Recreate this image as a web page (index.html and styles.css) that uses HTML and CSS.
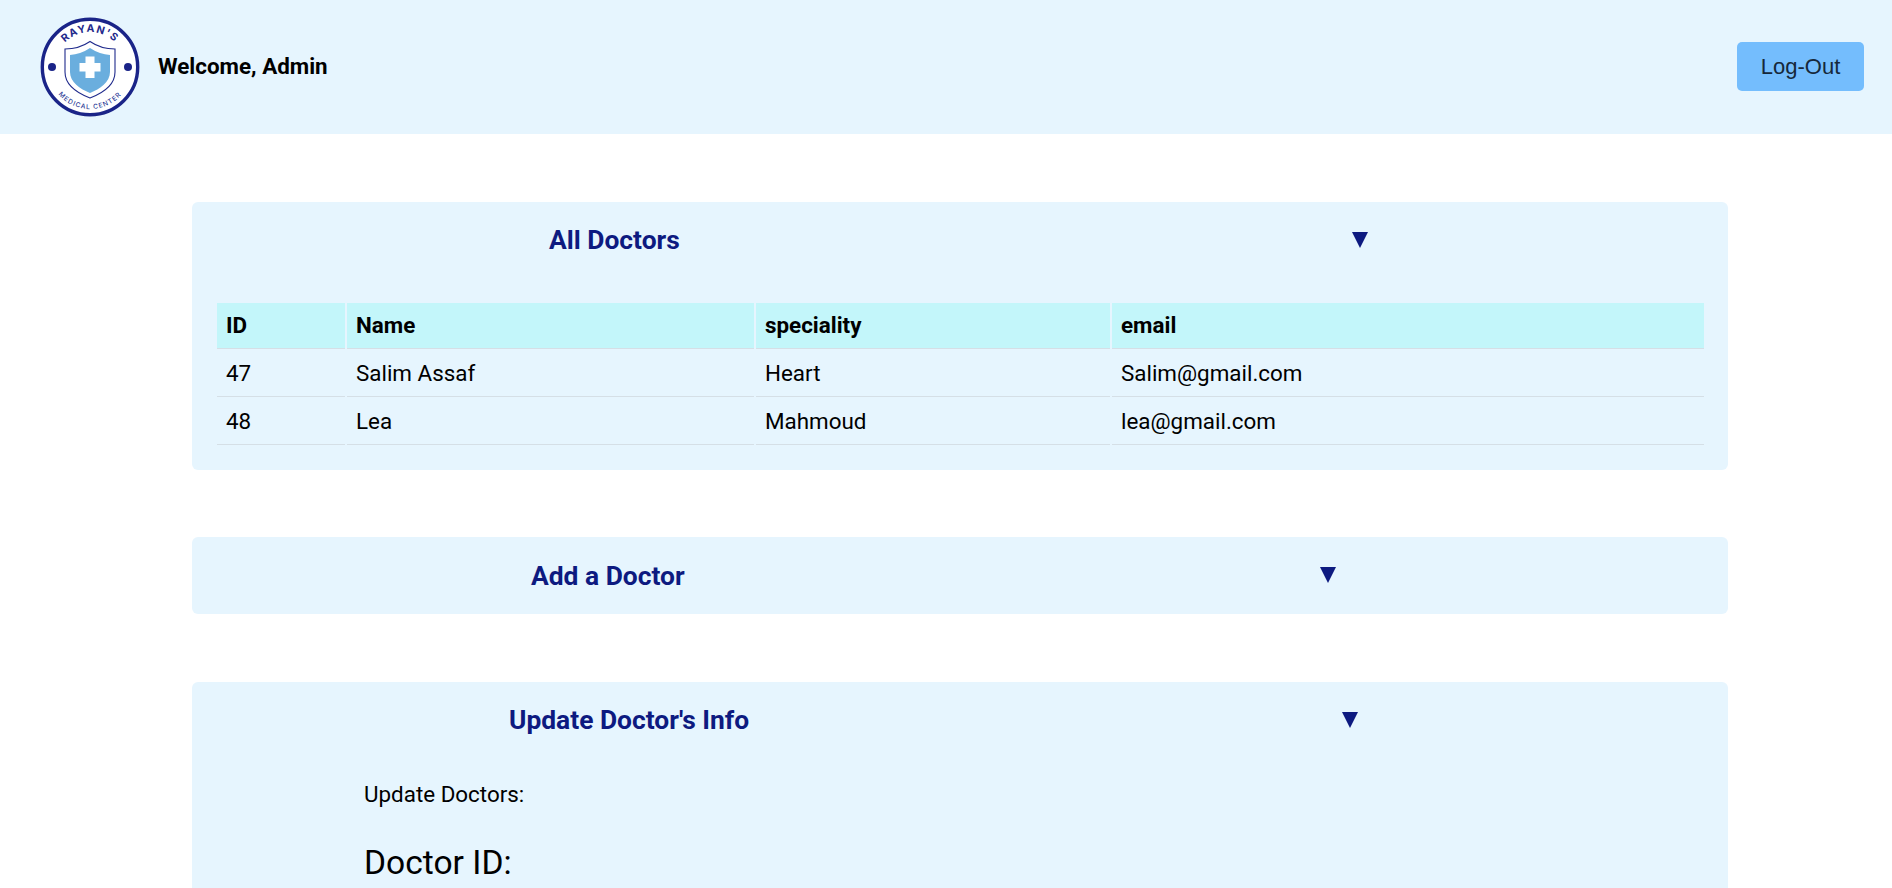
FILE: index.html
```html
<!DOCTYPE html>
<html>
	<head>
		<meta charset="utf-8" />
		<meta name="viewport" content="width=device-width, initial-scale=1" />
		<title>Admin</title>
		<link rel="stylesheet" href="styles.css">
	</head>

	<body>
		<header class="topbar">
			<div class="brand">
				<svg class="logo" viewBox="0 0 100 100" width="100" height="100">
					<defs>
						<path id="arc-top" d="M15 50 A35 35 0 0 1 85 50" />
						<path id="arc-bottom" d="M8 50 A42 42 0 0 0 92 50" />
					</defs>
					<circle cx="50" cy="50" r="47.7" fill="#fff" stroke="#1a2488" stroke-width="3.4" />
					<circle cx="12" cy="50" r="4" fill="#1a2488" />
					<circle cx="88" cy="50" r="4" fill="#1a2488" />
					<path d="M50 24.5 C58 30 66 32 75 32 L75 55 C75 68 63 76 50 81 C37 76 25 68 25 55 L25 32 C34 32 42 30 50 24.5 Z" fill="#fff" stroke="#1f2a8c" stroke-width="1.1" />
					<path d="M50 31 C57 35.5 63 37.5 70 38 L70 55 C70 65 60 72 50 76 C40 72 30 65 30 55 L30 38 C37 37.5 43 35.5 50 31 Z" fill="#6aaede" />
					<path d="M45.5 39.5 H54.5 V46 H60.5 V54.5 H54.5 V61 H45.5 V54.5 H39.5 V46 H45.5 Z" fill="#fff" />
					<text class="logo-top"><textPath href="#arc-top" startOffset="50%" text-anchor="middle">RAYAN'S</textPath></text>
					<text class="logo-bottom"><textPath href="#arc-bottom" startOffset="50%" text-anchor="middle">MEDICAL CENTER</textPath></text>
				</svg>
				<span class="welcome">Welcome, Admin</span>
			</div>
			<button class="logout">Log-Out</button>
		</header>

		<main class="content">
			<section class="card card-all">
				<div class="card-head head-all">
					<h2>All Doctors</h2>
					<span class="arrow"></span>
				</div>
				<table class="doctors">
					<colgroup>
						<col class="col-id" />
						<col class="col-name" />
						<col class="col-spec" />
						<col />
					</colgroup>
					<thead>
						<tr>
							<th>ID</th>
							<th>Name</th>
							<th>speciality</th>
							<th>email</th>
						</tr>
					</thead>
					<tbody>
						<tr>
							<td>47</td>
							<td>Salim Assaf</td>
							<td>Heart</td>
							<td>Salim@gmail.com</td>
						</tr>
						<tr>
							<td>48</td>
							<td>Lea</td>
							<td>Mahmoud</td>
							<td>lea@gmail.com</td>
						</tr>
					</tbody>
				</table>
			</section>

			<section class="card card-add">
				<div class="card-head head-add">
					<h2>Add a Doctor</h2>
					<span class="arrow"></span>
				</div>
			</section>

			<section class="card card-last">
				<div class="card-head head-update">
					<h2>Update Doctor's Info</h2>
					<span class="arrow"></span>
				</div>
				<form class="update-form">
					<p class="form-title">Update Doctors:</p>
					<label class="form-label">Doctor ID:</label>
				</form>
			</section>
		</main>
	</body>
</html>
```

FILE: styles.css
```css
html,
body {
	height: 888px;
	overflow: hidden;
}

body {
	margin: 0;
	background: #fff;
	color: #000;
	font-family: Roboto, sans-serif;
}

.topbar {
	display: flex;
	justify-content: space-between;
	align-items: center;
	height: 134px;
	padding: 0 28px 0 40px;
	background: #e6f5fe;
}

.brand {
	display: flex;
	align-items: center;
	gap: 18px;
}

.logo {
	display: block;
}

.logo-top {
	font-family: Inter, sans-serif;
	font-size: 10.5px;
	font-weight: 700;
	letter-spacing: 1.3px;
	fill: #1f2a8c;
}

.logo-bottom {
	font-family: Inter, sans-serif;
	font-size: 6.6px;
	font-weight: 500;
	letter-spacing: 1px;
	fill: #2b3a96;
}

.welcome {
	margin-bottom: 2px;
	font-size: 22.4px;
	font-weight: 700;
}

.logout {
	width: 127px;
	height: 49px;
	margin-bottom: 1px;
	padding: 0;
	border: 0;
	border-radius: 5px;
	background: #74bdfd;
	color: #16283a;
	font-family: "Liberation Sans", sans-serif;
	font-size: 22px;
}

.content {
	width: 1536px;
	margin: 68px 0 0 192px;
}

.card {
	margin-bottom: 67px;
	padding: 0 22px 0 23px;
	border-radius: 6px;
	background: #e6f5fe;
}

.card-all {
	padding-bottom: 25px;
}

.card-add {
	margin-bottom: 68px;
}

.card-head {
	display: flex;
	align-items: center;
	height: 77px;
}

.card-head h2 {
	margin: 0 0 2px;
	color: #0d1a80;
	font-size: 26.4px;
	font-weight: 700;
}

.arrow {
	width: 0;
	height: 0;
	margin-bottom: 2px;
	border-top: 16px solid #0d1a80;
	border-left: 8px solid transparent;
	border-right: 8px solid transparent;
}

.head-all h2 {
	margin-left: 334px;
}

.head-all .arrow {
	margin-left: 672px;
}

.head-add h2 {
	margin-left: 316px;
	margin-bottom: 0;
}

.head-add .arrow {
	margin-left: 635px;
}

.head-update h2 {
	margin-left: 294px;
}

.head-update .arrow {
	margin-left: 593px;
}

.doctors {
	width: 100%;
	margin-top: 24px;
	border-collapse: separate;
	border-spacing: 2px 0;
	table-layout: fixed;
	font-size: 22.4px;
}

.col-id {
	width: 128px;
}

.col-name {
	width: 407px;
}

.col-spec {
	width: 354px;
}

.doctors th,
.doctors td {
	height: 47px;
	padding: 0 9px;
	border-bottom: 1px solid #d5dfe6;
	text-align: left;
}

.doctors th {
	height: 43px;
	padding-bottom: 2px;
	background: #c3f6fa;
}

.card-last {
	height: 300px;
	margin-bottom: 0;
}

.update-form {
	padding-left: 149px;
}

.form-title {
	margin: 22px 0 0;
	font-size: 22.4px;
}

.form-label {
	display: block;
	margin-top: 36px;
	font-size: 33.6px;
}
```
